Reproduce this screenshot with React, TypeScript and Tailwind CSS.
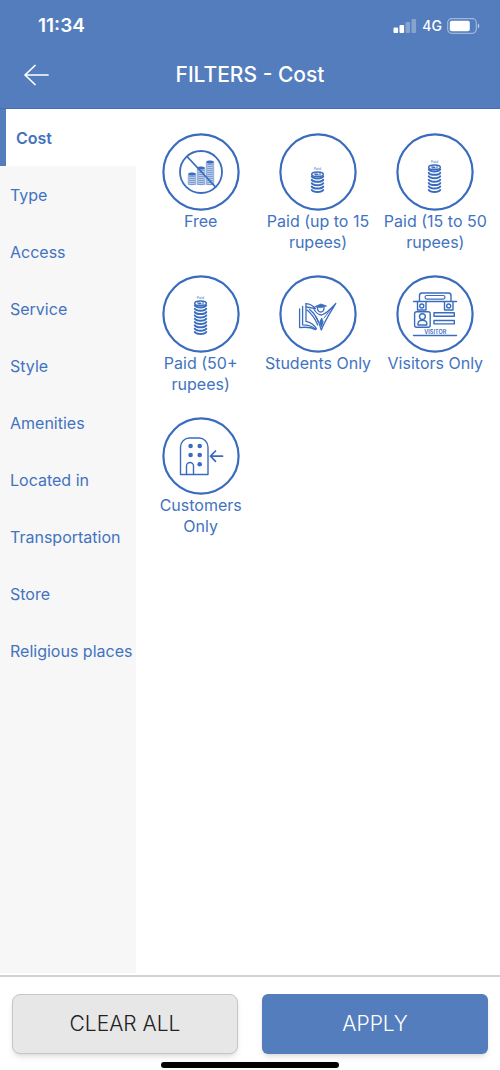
import React, { useState } from 'react';

const CATEGORIES = [
  'Cost',
  'Type',
  'Access',
  'Service',
  'Style',
  'Amenities',
  'Located in',
  'Transportation',
  'Store',
  'Religious places',
];

const IconFrame: React.FC<{ children: React.ReactNode }> = ({ children }) => (
  <svg
    viewBox="0 0 78 78"
    className="size-[78px] text-[#3a6cbe]"
    fill="none"
    stroke="currentColor"
    strokeWidth="1.4"
    strokeLinecap="round"
    strokeLinejoin="round"
    aria-hidden="true"
  >
    <circle cx="39" cy="39" r="37.6" strokeWidth="2.2" />
    {children}
  </svg>
);

// Small solid stack used inside the "free" sign
const Stack: React.FC<{ x: number; top: number }> = ({ x, top }) => {
  const lines: number[] = [];
  for (let y = top + 3; y < 52; y += 2) lines.push(y);
  return (
    <g>
      <rect x={x} y={top + 1} width="8" height={51 - top} fill="currentColor" opacity="0.3" stroke="none" />
      <ellipse cx={x + 4} cy={top + 1} rx="3.6" ry="1.3" fill="currentColor" strokeWidth="0.5" />
      {lines.map((y) => (
        <path key={y} d={`M${x} ${y}q4 1.6 8 0`} strokeWidth="0.6" />
      ))}
    </g>
  );
};

const FreeIcon = () => (
  <IconFrame>
    <Stack x={26} top={40} />
    <Stack x={35} top={34} />
    <Stack x={44} top={28} />
    <circle cx="39" cy="39" r="21" strokeWidth="1.8" />
    <path d="M25.5 24L53.5 54" strokeWidth="1.8" />
  </IconFrame>
);

const CoinsIcon: React.FC<{ top: number; coins: number }> = ({ top, coins }) => {
  const step = (52.5 - top) / (coins - 1);
  return (
    <IconFrame>
      <text
        x="38.5"
        y={top - 2}
        textAnchor="middle"
        fontSize="3.5"
        fontWeight="500"
        fill="currentColor"
        stroke="none"
        opacity="0.8"
      >
        Paid
      </text>
      <ellipse cx="38.5" cy={top + 2.3} rx="5.8" ry="2.4" strokeWidth="1.5" />
      <path d={`M35.5 ${top + 2}h3M36.5 ${top + 3}h3M41 ${top + 1.4}v1.8`} strokeWidth="1.1" />
      {Array.from({ length: coins }, (_, i) => (
        <path
          key={i}
          d={`M32.8 ${top + 4.5 + i * step}c1.6 2.6 9.800 2.6 11.4 0`}
          strokeWidth="2"
        />
      ))}
    </IconFrame>
  );
};

const StudentsIcon = () => (
  <IconFrame>
    <g strokeWidth="1.3">
      <path d="M20.600 34v18.600c6-.8 11.500-.4 16 2" />
      <path d="M23.600 31.500v18.300c5 0 9.500 1 13 4.400" />
      <path d="M27 28.600v17.800c4.500 1 8 3.200 10.500 7.400" />
      <path d="M27 28.600c4 .4 7.400 2.200 9.400 5l-9-1.600" />
      <path d="M28 35c4.500 3.500 8 8.400 10.700 15M30.500 34.500c4 3 7 7.200 9 12.500" />
      <path d="M36 31.600l6-2.600 5.500 2-5.500 1.600z" fill="currentColor" strokeWidth="0.8" />
      <path d="M38.500 32.500c-.5 6 7 6 6.500 0" />
      <path d="M35 34.500c2.500 4 5.500 5.500 7.800 5.500 4.500-1.500 9.500-6.500 14-11.500-4.800 8-10 15-14.500 26.500-1.200-5-3.300-9.500-5.300-13" />
      <path d="M42.500 43.500l-1.700 3.500 1.600 5 1.600-5zM45 43l7-9" fill="currentColor" strokeWidth="1" />
    </g>
  </IconFrame>
);

const VisitorsIcon = () => (
  <IconFrame>
    <path d="M23.500 26v-5.500a2.500 2.500 0 0 1 2.500-2.500h26.500a2.500 2.500 0 0 1 2.500 2.500v5.500" />
    <rect x="29" y="20.5" width="20" height="3.6" rx="1.8" strokeWidth="1.2" />
    <path d="M17.500 26.500h43M21.500 27v8h8.500v-8M48.500 27v8h8.500v-8" />
    <circle cx="25.8" cy="31" r="2" />
    <circle cx="52.7" cy="31" r="2" />
    <rect x="18.6" y="36.700" width="15.6" height="15.6" rx="2" />
    <circle cx="26.4" cy="41.6" r="2.9" />
    <path d="M22 50v-1.500a4.400 3.300 0 0 1 8.800 0v1.500z" />
    <rect x="38" y="37.8" width="20.3" height="3.4" />
    <rect x="38" y="45.5" width="20.3" height="3.4" />
    <text
      x="39.3"
      y="58.5"
      textAnchor="middle"
      fontSize="5.5"
      fontWeight="600"
      fill="currentColor"
      stroke="none"
    >
      VISITOR
    </text>
    <path d="M17.500 60.500h43" />
  </IconFrame>
);

const CustomersIcon = () => (
  <IconFrame>
    <path d="M18.500 57.500V30a9 9 0 0 1 9-9h9.500a9 9 0 0 1 9 9v27.500z" />
    <path d="M24.500 57.500v-8.500a3.500 3.500 0 0 1 7 0v8.500" />
    <g fill="currentColor" stroke="none">
      <circle cx="28.6" cy="29" r="2.3" />
      <circle cx="37.7" cy="29" r="2.3" />
      <circle cx="28.6" cy="38" r="2.3" />
      <circle cx="37.7" cy="38" r="2.3" />
      <circle cx="37.7" cy="47.2" r="2.3" />
    </g>
    <path d="M60.500 39.200H48.500M53.500 34l-5 5.200 5 5.200" strokeWidth="1.7" />
  </IconFrame>
);

const OPTIONS: { label: string; icon: React.ReactNode }[] = [
  { label: 'Free', icon: <FreeIcon /> },
  { label: 'Paid (up to 15 rupees)', icon: <CoinsIcon top={39} coins={5} /> },
  { label: 'Paid (15 to 50 rupees)', icon: <CoinsIcon top={32} coins={7} /> },
  { label: 'Paid (50+ rupees)', icon: <CoinsIcon top={26} coins={9} /> },
  { label: 'Students Only', icon: <StudentsIcon /> },
  { label: 'Visitors Only', icon: <VisitorsIcon /> },
  { label: 'Customers Only', icon: <CustomersIcon /> },
];

const StatusBar = () => (
  <div className="flex h-[52px] items-center justify-between pl-[38px] pr-5">
    <span className="text-[19px] font-semibold leading-6">11:34</span>
    <div className="flex items-center gap-[5px]">
      <svg viewBox="0 0 24 14" className="h-3.5 w-6" fill="currentColor" aria-hidden="true">
        <rect x="0.5" y="8.5" width="4.6" height="5.5" rx="1" />
        <rect x="6.5" y="6" width="4.6" height="8" rx="1" />
        <rect x="12.500" y="3" width="4.6" height="11" rx="1" opacity="0.3" />
        <rect x="18.500" y="0" width="4.6" height="14" rx="1" opacity="0.3" />
      </svg>
      <span className="text-sm font-medium leading-5">4G</span>
      <svg viewBox="0 0 33 16" className="h-4 w-[33px]" aria-hidden="true">
        <rect x="0.7" y="0.7" width="28.6" height="14.6" rx="4" fill="none" stroke="currentColor" strokeWidth="1.2" opacity="0.45" />
        <rect x="2.8" y="2.8" width="20" height="10.4" rx="2" fill="currentColor" />
        <path d="M30.800 5.500c2 .8 2 4.200 0 5z" fill="currentColor" opacity="0.6" />
      </svg>
    </div>
  </div>
);

export default function App() {
  const [category, setCategory] = useState('Cost');
  const [selected, setSelected] = useState<string[]>([]);

  const toggle = (label: string) => {
    setSelected((prev) => (prev.includes(label) ? prev.filter((l) => l !== label) : [...prev, label]));
  };

  return (
    <div className="flex min-h-screen flex-col bg-white font-['Inter',sans-serif] text-[#4273bf]">
      {/* Header */}
      <header className="border-b border-[#426fb9] bg-[#537dbd] text-white">
        <StatusBar />
        <div className="grid h-14 grid-cols-[72px_1fr_72px] items-center pb-2.5">
          <button type="button" aria-label="Back" className="flex h-10 items-center pl-6">
            <svg
              viewBox="0 0 26 22"
              className="h-[22px] w-[26px]"
              fill="none"
              stroke="currentColor"
              strokeWidth="1.7"
              strokeLinecap="round"
              strokeLinejoin="round"
            >
              <path d="M24 11H1M11 1.500L1 11l10 9.500" />
            </svg>
          </button>
          <h1 className="text-center text-[21px] font-medium leading-7">FILTERS - Cost</h1>
        </div>
      </header>

      {/* Main */}
      <main className="flex flex-1">
        <nav className="mb-0.5 w-[136px] shrink-0 bg-[#f7f7f7]">
          {CATEGORIES.map((name) => (
            <button
              key={name}
              type="button"
              onClick={() => setCategory(name)}
              className={`flex h-[57px] w-full items-center whitespace-nowrap pl-2.5 text-left text-base ${
                category === name ? 'border-l-[6px] border-[#537dbd] bg-white font-semibold' : ''
              }`}
            >
              {name}
            </button>
          ))}
        </nav>

        <div className="grid flex-1 grid-cols-3 content-start gap-y-[22px] px-1.5 pt-6">
          {OPTIONS.map(({ label, icon }) => (
            <button
              key={label}
              type="button"
              aria-pressed={selected.includes(label)}
              onClick={() => toggle(label)}
              className="flex min-h-[120px] flex-col items-center text-center text-base leading-[21px]"
            >
              {icon}
              <span>{label}</span>
            </button>
          ))}
        </div>
      </main>

      {/* Footer */}
      <footer className="border-t-2 border-[#d3d3d3] px-3 pt-[17px]">
        <div className="grid grid-cols-2 gap-6">
          <button
            type="button"
            onClick={() => setSelected([])}
            className="h-[60px] rounded-lg border border-[#c6c6c6] bg-[#e7e7e7] text-[21px] font-light text-[#222222] shadow-md"
          >
            CLEAR ALL
          </button>
          <button
            type="button"
            className="h-[60px] rounded-md bg-[#537dbd] text-[21px] font-light text-white shadow-md"
          >
            APPLY
          </button>
        </div>
        <div className="mx-auto mb-0.5 mt-2 h-1.5 w-[178px] rounded-full bg-black" />
      </footer>
    </div>
  );
}
